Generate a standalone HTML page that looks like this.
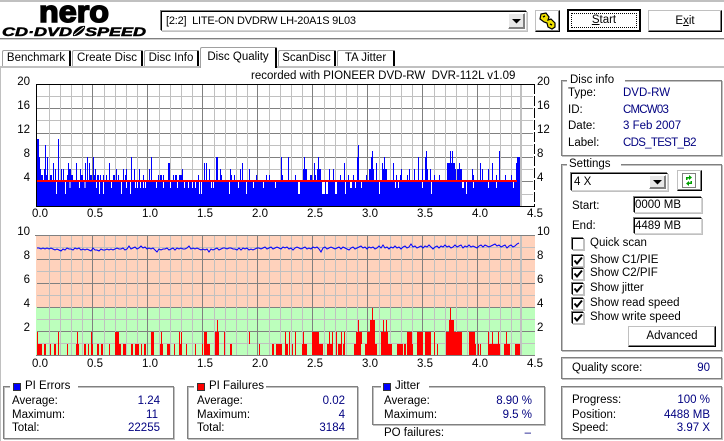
<!DOCTYPE html>
<html><head><meta charset="utf-8"><style>
html,body{margin:0;padding:0;background:#fff}
#r{position:relative;width:724px;height:441px;overflow:hidden;background:#fff;font:11.5px/14px "Liberation Sans","WenQuanYi Zen Hei",sans-serif;color:#000}
.a{position:absolute}
.t{position:absolute;white-space:nowrap;line-height:14px}
.v{position:absolute;white-space:nowrap;line-height:14px;color:#000080}
.r{text-align:right}
.g{position:absolute;border:1px solid #808080;box-shadow:1px 1px 0 #c0c0c0,inset 1px 1px 0 #c0c0c0;box-sizing:border-box}
.tab{position:absolute;top:50px;height:16px;box-sizing:border-box;border:1px solid #a0a0a0;border-right:2px solid #000;border-bottom:0;border-radius:2px 2px 0 0;background:#fff;text-align:center;line-height:15px;white-space:nowrap}
.sunk{position:absolute;box-sizing:border-box;border:1px solid #000;border-right:1px solid #d4d4d4;border-bottom:1px solid #d4d4d4;box-shadow:1px 1px 0 #c0c0c0,-1px -1px 0 #808080;background:#fff}
.btn{position:absolute;box-sizing:border-box;border:1px solid #c0c0c0;border-right-color:#000;border-bottom-color:#000;box-shadow:inset -1px -1px 0 #808080;background:#fff;text-align:center}
.cb{position:absolute;left:572px;width:12px;height:12px;box-sizing:border-box;border:1px solid #000;border-right:1px solid #c0c0c0;border-bottom:1px solid #c0c0c0;box-shadow:1px 1px 0 #c0c0c0,-1px -1px 0 #808080;background:#fff}
.cb svg{position:absolute;left:0;top:0}
.sq{position:absolute;width:8px;height:8px;border:1px solid #333;box-sizing:border-box}
</style></head><body><div id="r">

<div class="a" style="left:0;top:0;width:724px;height:2px;background:#c0c0c0"></div>
<div class="a" style="left:0;top:38px;width:724px;height:1px;background:#808080"></div>
<div class="a" style="left:0;top:39px;width:724px;height:1px;background:#d0d0d0"></div>
<div class="a" style="left:0;top:66px;width:724px;height:2px;background:#c0c0c0"></div>
<div class="a" style="left:0;top:66px;width:1px;height:375px;background:#c0c0c0"></div>

<svg class="a" style="left:0;top:0" width="155" height="40">
<text x="39" y="22" font-family="Liberation Sans" font-weight="700" font-size="31" textLength="70" lengthAdjust="spacingAndGlyphs" stroke="#000" stroke-width="1.6">nero</text>
<text x="2" y="36" font-family="Liberation Sans" font-weight="700" font-style="italic" font-size="12" textLength="70" lengthAdjust="spacingAndGlyphs" stroke="#000" stroke-width=".5">CD·DVD</text>
<path d="M73 36 C72 31 79 25 85 26 C86 30 79 37 73 36Z" fill="#000"/>
<path d="M74 35 L84 27" stroke="#fff" stroke-width="1"/>
<text x="85" y="36" font-family="Liberation Sans" font-weight="700" font-style="italic" font-size="12" textLength="61" lengthAdjust="spacingAndGlyphs" stroke="#000" stroke-width=".5">SPEED</text>
</svg>

<div class="sunk" style="left:161px;top:11px;width:366px;height:20px"></div>
<div class="t" style="left:166px;top:14px;font-size:11px;letter-spacing:-.2px">[2:2]&nbsp; LITE-ON DVDRW LH-20A1S 9L03</div>
<div class="btn" style="left:508px;top:13px;width:17px;height:16px;border-color:#fff #808080 #808080 #fff;background:#e8e8e8"></div>
<svg class="a" style="left:512px;top:19px" width="10" height="5"><path d="M0 0H9L4.5 4.5Z" fill="#000"/></svg>

<div class="btn" style="left:535px;top:10px;width:25px;height:22px"></div>
<svg class="a" style="left:538px;top:12px" width="20" height="18">
<path d="M3 2 L8 1 L11 5 L10 8 L13 7 L17 11 L17 15 L14 17 L10 15 L9 11 L6 10 L2 7Z" fill="#f0e000" stroke="#000" stroke-width="1.2"/>
<path d="M5 5 L7 4 M12 12 L14 13" stroke="#000" stroke-width="1.5"/>
</svg>

<div class="btn" style="left:567px;top:9px;width:74px;height:23px;border:2px solid #000;box-shadow:none;line-height:19px"><span style="position:absolute;left:2px;top:2px;right:2px;bottom:2px;border:1px dotted #000"></span><u style="text-decoration:underline">S</u>tart</div>
<div class="btn" style="left:648px;top:10px;width:74px;height:22px;line-height:20px">E<u>x</u>it</div>

<div class="tab" style="left:2px;width:69px">Benchmark</div>
<div class="tab" style="left:72px;width:71px">Create Disc</div>
<div class="tab" style="left:144px;width:55px">Disc Info</div>
<div class="tab" style="left:200px;top:47px;width:77px;height:21px;line-height:18px;border-bottom:0">Disc Quality</div>
<div class="tab" style="left:278px;width:58px">ScanDisc</div>
<div class="tab" style="left:337px;width:58px">TA Jitter</div>

<div class="t" style="left:251px;top:69px">recorded with PIONEER DVD-RW&nbsp; DVR-112L v1.09</div>

<svg class="a" style="left:0;top:70px" width="560" height="310" viewBox="0 70 560 310" shape-rendering="crispEdges">
<!-- chart 1 grid -->
<path d="M37 96.5H533M37 120.5H533M37 145.5H533M37 169.5H533M37 194.5H533" stroke="#c0c0c0"/>
<path d="M37 108.5H533M37 133.5H533M37 157.5H533M37 181.5H533" stroke="#808080"/>
<path d="M49.5 84V206M60.5 84V206M71.5 84V206M82.5 84V206M104.5 84V206M115.5 84V206M126.5 84V206M137.5 84V206M159.5 84V206M170.5 84V206M181.5 84V206M192.5 84V206M214.5 84V206M225.5 84V206M236.5 84V206M247.5 84V206M269.5 84V206M280.5 84V206M291.5 84V206M302.5 84V206M324.5 84V206M335.5 84V206M346.5 84V206M357.5 84V206M379.5 84V206M390.5 84V206M401.5 84V206M412.5 84V206M434.5 84V206M445.5 84V206M456.5 84V206M467.5 84V206M489.5 84V206M500.5 84V206M511.5 84V206" stroke="#c0c0c0"/>
<path d="M92.5 84V206M147.5 84V206M202.5 84V206M257.5 84V206M312.5 84V206M367.5 84V206M422.5 84V206M477.5 84V206" stroke="#808080"/>
<rect x="520" y="84" width="2" height="122" fill="#c0c0c0"/>
<!-- blue bars -->
<rect x="37" y="181" width="483" height="25" fill="#0000ff"/>
<g stroke="#0000ff" stroke-width="1" fill="none">
<path d="M37.5 206V139M38.5 206V139M58.5 206V139"/>
<path d="M45.5 206V145M358.5 206V145"/>
<path d="M372.5 206V151M426.5 206V151M450.5 206V151M452.5 206V151M499.5 206V151"/>
<path d="M39.5 206V157M47.5 206V157M87.5 206V157M93.5 206V157M131.5 206V157M151.5 206V157M216.5 206V157M217.5 206V157M281.5 206V157M288.5 206V157M304.5 206V157M318.5 206V157M357.5 206V157M371.5 206V157M384.5 206V157M418.5 206V157M425.5 206V157M517.5 206V157M518.5 206V157M519.5 206V157"/>
<path d="M53.5 206V163M68.5 206V163M76.5 206V163M85.5 206V163M89.5 206V163M109.5 206V163M168.5 206V163M169.5 206V163M204.5 206V163M206.5 206V163M242.5 206V163M314.5 206V163M344.5 206V163M376.5 206V163M382.5 206V163M393.5 206V163M447.5 206V163M448.5 206V163M449.5 206V163M451.5 206V163M453.5 206V163M454.5 206V163M459.5 206V163M480.5 206V163M492.5 206V163M516.5 206V163"/>
<path d="M40.5 206V169M44.5 206V169M55.5 206V169M61.5 206V169M63.5 206V169M69.5 206V169M70.5 206V169M80.5 206V169M95.5 206V169M116.5 206V169M123.5 206V169M126.5 206V169M134.5 206V169M139.5 206V169M149.5 206V169M182.5 206V169M209.5 206V169M220.5 206V169M230.5 206V169M240.5 206V169M249.5 206V169M303.5 206V169M305.5 206V169M306.5 206V169M317.5 206V169M319.5 206V169M320.5 206V169M329.5 206V169M333.5 206V169M369.5 206V169M370.5 206V169M373.5 206V169M383.5 206V169M385.5 206V169M386.5 206V169M401.5 206V169M409.5 206V169M414.5 206V169M422.5 206V169M427.5 206V169M430.5 206V169M455.5 206V169M457.5 206V169M458.5 206V169M460.5 206V169M461.5 206V169M472.5 206V169M482.5 206V169M488.5 206V169"/>
<path d="M41.5 206V175M42.5 206V175M46.5 206V175M50.5 206V175M51.5 206V175M67.5 206V175M71.5 206V175M72.5 206V175M81.5 206V175M82.5 206V175M90.5 206V175M91.5 206V175M94.5 206V175M97.5 206V175M98.5 206V175M100.5 206V175M103.5 206V175M106.5 206V175M113.5 206V175M114.5 206V175M118.5 206V175M125.5 206V175M143.5 206V175M158.5 206V175M160.5 206V175M161.5 206V175M163.5 206V175M173.5 206V175M175.5 206V175M176.5 206V175M179.5 206V175M180.5 206V175M181.5 206V175M198.5 206V175M221.5 206V175M231.5 206V175M234.5 206V175M256.5 206V175M266.5 206V175M269.5 206V175M282.5 206V175M295.5 206V175M310.5 206V175M311.5 206V175M315.5 206V175M340.5 206V175M348.5 206V175M353.5 206V175M366.5 206V175M396.5 206V175M400.5 206V175M407.5 206V175M434.5 206V175M439.5 206V175M458.5 206V175M473.5 206V175M496.5 206V175M505.5 206V175M511.5 206V175"/>
</g>
<g stroke="#fff" stroke-width="1" fill="none">
<path d="M56.5 181V194M65.5 181V194M70 181V188M79.5 181V188M85 181V188M96.5 181V188M99.5 181V194M103.5 181V194M111.5 181V188M121.5 181V194M126.5 181V188M130.5 181V194M135.5 181V188M137.5 181V188M140.5 181V188M143.5 181V188M145.5 181V188M156.5 181V188M163.5 181V188M170.5 181V188M177.5 181V188M184.5 181V188M188.5 181V188M192.5 181V188M195.5 181V188M199.5 181V194M201.5 181V194M211.5 181V188M213.5 181V188M229.5 181V194M238.5 181V188M246.5 181V194M253.5 181V188M263.5 181V188M275.5 181V188"/>
<path d="M298.5 181V194M299.5 181V194M322.5 181V194M323.5 181V194M324.5 181V194M326.5 181V194M327.5 181V194M335.5 181V194M336.5 181V194M345.5 181V194M350.5 181V188M351.5 181V188M355.5 181V188M361.5 181V188M379.5 181V194M395.5 181V188M398.5 181V188M422.5 181V188M431.5 181V194M462.5 181V188M463.5 181V188M466.5 181V194M473.5 181V188M488.5 181V188M496.5 181V188M513.5 181V188"/>
</g>
<rect x="37" y="180" width="480" height="2" fill="#ff0000"/>
<!-- chart 1 axes -->
<path d="M36 84.5H535M36 206.5H535" stroke="#000"/>
<path d="M36.5 84V207" stroke="#000"/>
<path d="M534.5 84V207" stroke="#000" stroke-dasharray="10 2"/>

<!-- chart 2 -->
<rect x="36" y="236" width="499" height="71" fill="#ffd2bc"/>
<rect x="36" y="307" width="499" height="49" fill="#bcffbc"/>
<path d="M37 247.5H535M37 271.5H535M37 295.5H535M37 319.5H535M37 343.5H535" stroke="#c0c0c0"/>
<path d="M35 235.5H535M37 259.5H535M37 283.5H535M37 307.5H535M37 331.5H535" stroke="#808080"/>
<path d="M49.5 236V356M60.5 236V356M71.5 236V356M82.5 236V356M104.5 236V356M115.5 236V356M126.5 236V356M137.5 236V356M159.5 236V356M170.5 236V356M181.5 236V356M192.5 236V356M214.5 236V356M225.5 236V356M236.5 236V356M247.5 236V356M269.5 236V356M280.5 236V356M291.5 236V356M302.5 236V356M324.5 236V356M335.5 236V356M346.5 236V356M357.5 236V356M379.5 236V356M390.5 236V356M401.5 236V356M412.5 236V356M434.5 236V356M445.5 236V356M456.5 236V356M467.5 236V356M489.5 236V356M500.5 236V356M511.5 236V356M520.5 236V356M521.5 236V356" stroke="#c0c0c0"/>
<path d="M92.5 236V356M147.5 236V356M202.5 236V356M257.5 236V356M312.5 236V356M367.5 236V356M422.5 236V356M477.5 236V356" stroke="#808080"/>
<!-- red -->
<g fill="#ff0000">
<path d="M37 344h5v12h-5zM44 344h2v12h-2zM50 344h1v12h-1zM54 344h2v12h-2zM58 344h1v12h-1zM67 344h1v12h-1zM76 344h3v12h-3zM84 344h2v12h-2zM88 344h1v12h-1zM91 344h2v12h-2zM97 344h2v12h-2zM101 344h2v12h-2zM109 344h1v12h-1zM115 344h6v12h-6zM123 344h3v12h-3zM131 344h2v12h-2zM135 344h4v12h-4zM141 344h1v12h-1zM144 344h2v12h-2zM151 344h3v12h-3zM160 344h3v12h-3zM167 344h3v12h-3zM174 344h1v12h-1zM179 344h3v12h-3zM186 344h1v12h-1zM195 344h1v12h-1zM202 344h1v12h-1zM204 344h6v12h-6zM215 344h4v12h-4zM224 344h1v12h-1zM230 344h2v12h-2zM259 344h1v12h-1zM272 344h2v12h-2zM276 344h6v12h-6zM285 344h1v12h-1zM286 344h2v12h-2zM289 344h1v12h-1zM292 344h1v12h-1zM295 344h1v12h-1zM302 344h5v12h-5zM312 344h11v12h-11zM327 344h6v12h-6zM336 344h1v12h-1zM338 344h3v12h-3zM341 344h1v12h-1zM343 344h2v12h-2zM354 344h7v12h-7zM365 344h12v12h-12zM381 344h11v12h-11zM397 344h6v12h-6zM404 344h2v12h-2zM407 344h6v12h-6zM417 344h6v12h-6zM425 344h6v12h-6zM434 344h1v12h-1zM437 344h1v12h-1zM446 344h16v12h-16zM469 344h7v12h-7zM478 344h1v12h-1zM480 344h1v12h-1zM488 344h12v12h-12zM504 344h6v12h-6zM515 344h5v12h-5z"/>
<path d="M37 332h1v12h-1zM58 332h1v12h-1zM77 332h1v12h-1zM91 332h1v12h-1zM115 332h4v12h-4zM151 332h3v12h-3zM161 332h1v12h-1zM179 332h1v12h-1zM181 332h1v12h-1zM204 332h3v12h-3zM215 332h4v12h-4zM224 332h1v12h-1zM249 332h1v12h-1zM285 332h1v12h-1zM289 332h1v12h-1zM295 332h1v12h-1zM303 332h1v12h-1zM312 332h7v12h-7zM329 332h1v12h-1zM332 332h1v12h-1zM336 332h1v12h-1zM341 332h1v12h-1zM344 332h1v12h-1zM356 332h6v12h-6zM367 332h8v12h-8zM381 332h7v12h-7zM407 332h5v12h-5zM417 332h6v12h-6zM425 332h6v12h-6zM434 332h1v12h-1zM446 332h16v12h-16zM469 332h6v12h-6zM488 332h1v12h-1zM492 332h1v12h-1zM498 332h1v12h-1zM506 332h1v12h-1z"/>
<path d="M217 320h1v12h-1zM358 320h1v12h-1zM370 320h5v12h-5zM383 320h1v12h-1zM386 320h1v12h-1zM449 320h5v12h-5z"/>
<path d="M372 308h1v12h-1zM450 308h1v12h-1z"/>
</g>
<polyline fill="none" stroke="#0000ff" stroke-width="1" shape-rendering="auto" points="37,248 39,248 41,249 43,248 45,249 47,248 49,249 51,248 53,249 55,250 57,249 59,250 61,251 63,249 65,250 67,248 69,249 71,249 73,250 75,248 77,249 79,248 81,250 83,249 85,250 87,249 89,250 91,251 93,248 95,250 97,250 99,251 101,249 103,250 105,250 107,249 109,250 111,249 113,250 115,249 117,248 119,249 121,249 123,248 125,250 127,249 129,246 131,249 133,248 135,247 137,249 139,248 141,246 143,248 145,247 147,249 149,248 151,249 153,248 155,250 157,252 159,249 161,250 163,249 165,249 167,248 169,250 171,249 173,248 175,250 177,248 179,249 181,248 183,249 185,249 187,248 189,246 191,249 193,248 195,249 197,248 199,249 201,250 203,249 205,250 207,249 209,252 211,249 213,250 215,249 217,248 219,250 221,249 223,248 225,248 227,249 229,248 231,248 233,249 235,249 237,250 239,248 241,250 243,248 245,249 247,248 249,250 251,249 253,250 255,249 257,248 259,248 261,249 263,248 265,247 267,249 269,248 271,247 273,249 275,248 277,247 279,248 281,249 283,247 285,248 287,247 289,249 291,248 293,250 295,248 297,247 299,248 301,249 303,248 305,247 307,249 309,248 311,249 313,247 315,248 317,247 319,249 321,252 323,248 325,247 327,249 329,248 331,247 333,248 335,249 337,248 339,247 341,249 343,247 345,248 347,249 349,250 351,248 353,247 355,249 357,248 359,247 361,246 363,248 365,247 367,249 369,247 371,248 373,247 375,249 377,248 379,246 381,248 383,245 385,248 387,247 389,249 391,247 393,248 395,246 397,248 399,247 401,249 403,247 405,246 407,248 409,247 411,244 413,247 415,246 417,248 419,247 421,246 423,248 425,246 427,247 429,245 431,247 433,249 435,247 437,246 439,248 441,246 443,247 445,245 447,247 449,246 451,248 453,247 455,245 457,247 459,246 461,245 463,248 465,246 467,247 469,245 471,247 473,246 475,247 477,248 479,246 481,245 483,247 485,245 487,246 489,247 491,246 493,245 495,244 497,246 499,245 501,247 503,246 505,245 507,248 509,246 511,245 513,247 515,246 517,244 519,243"/>
<path d="M36 355.5H535" stroke="#808080"/>
</svg>

<!-- axis labels -->
<div class="t r" style="left:10px;width:20px;top:75px">20</div>
<div class="t r" style="left:10px;width:20px;top:99px">16</div>
<div class="t r" style="left:10px;width:20px;top:123px">12</div>
<div class="t r" style="left:10px;width:20px;top:147px">8</div>
<div class="t r" style="left:10px;width:20px;top:171px">4</div>
<div class="t" style="left:537px;top:75px">20</div>
<div class="t" style="left:537px;top:99px">16</div>
<div class="t" style="left:537px;top:123px">12</div>
<div class="t" style="left:537px;top:147px">8</div>
<div class="t" style="left:537px;top:171px">4</div>
<div class="t r" style="left:10px;width:20px;top:225px">10</div>
<div class="t r" style="left:10px;width:20px;top:249px">8</div>
<div class="t r" style="left:10px;width:20px;top:273px">6</div>
<div class="t r" style="left:10px;width:20px;top:297px">4</div>
<div class="t r" style="left:10px;width:20px;top:321px">2</div>
<div class="t" style="left:537px;top:225px">10</div>
<div class="t" style="left:537px;top:249px">8</div>
<div class="t" style="left:537px;top:273px">6</div>
<div class="t" style="left:537px;top:297px">4</div>
<div class="t" style="left:537px;top:321px">2</div>

<div class="t" style="left:32px;top:207px">0.0</div><div class="t" style="left:87px;top:207px">0.5</div><div class="t" style="left:142px;top:207px">1.0</div><div class="t" style="left:197px;top:207px">1.5</div><div class="t" style="left:252px;top:207px">2.0</div><div class="t" style="left:307px;top:207px">2.5</div><div class="t" style="left:362px;top:207px">3.0</div><div class="t" style="left:417px;top:207px">3.5</div><div class="t" style="left:472px;top:207px">4.0</div><div class="t" style="left:527px;top:207px">4.5</div>
<div class="t" style="left:32px;top:357px">0.0</div><div class="t" style="left:87px;top:357px">0.5</div><div class="t" style="left:142px;top:357px">1.0</div><div class="t" style="left:197px;top:357px">1.5</div><div class="t" style="left:252px;top:357px">2.0</div><div class="t" style="left:307px;top:357px">2.5</div><div class="t" style="left:362px;top:357px">3.0</div><div class="t" style="left:417px;top:357px">3.5</div><div class="t" style="left:472px;top:357px">4.0</div><div class="t" style="left:527px;top:357px">4.5</div>

<!-- bottom groups -->
<div class="g" style="left:3px;top:386px;width:171px;height:53px"></div>
<div class="a" style="left:10px;top:380px;width:68px;height:14px;background:#fff"></div>
<div class="sq" style="left:13px;top:383px;background:#0000ff"></div>
<div class="t" style="left:25px;top:379px">PI Errors</div>
<div class="t" style="left:12px;top:394px">Average:</div><div class="v r" style="left:100px;width:60px;top:394px">1.24</div>
<div class="t" style="left:12px;top:408px">Maximum:</div><div class="v r" style="left:100px;width:58px;top:408px">11</div>
<div class="t" style="left:12px;top:421px">Total:</div><div class="v r" style="left:100px;width:60px;top:421px">22255</div>

<div class="g" style="left:187px;top:386px;width:171px;height:53px"></div>
<div class="a" style="left:194px;top:380px;width:72px;height:14px;background:#fff"></div>
<div class="sq" style="left:197px;top:383px;background:#ff0000"></div>
<div class="t" style="left:209px;top:379px">PI Failures</div>
<div class="t" style="left:197px;top:394px">Average:</div><div class="v r" style="left:285px;width:60px;top:394px">0.02</div>
<div class="t" style="left:197px;top:408px">Maximum:</div><div class="v r" style="left:285px;width:60px;top:408px">4</div>
<div class="t" style="left:197px;top:421px">Total:</div><div class="v r" style="left:285px;width:60px;top:421px">3184</div>

<div class="g" style="left:372px;top:386px;width:173px;height:39px"></div>
<div class="a" style="left:381px;top:380px;width:48px;height:12px;background:#fff"></div>
<div class="sq" style="left:383px;top:383px;background:#0000ff"></div>
<div class="t" style="left:395px;top:379px">Jitter</div>
<div class="t" style="left:384px;top:394px">Average:</div><div class="v r" style="left:470px;width:62px;top:394px">8.90 %</div>
<div class="t" style="left:384px;top:408px">Maximum:</div><div class="v r" style="left:470px;width:62px;top:408px">9.5 %</div>
<div class="t" style="left:384px;top:426px">PO failures:</div><div class="v r" style="left:470px;width:61px;top:426px">–</div>

<!-- disc info -->
<div class="g" style="left:561px;top:80px;width:161px;height:76px"></div>
<div class="a" style="left:567px;top:74px;width:58px;height:12px;background:#fff"></div>
<div class="t" style="left:570px;top:73px">Disc info</div>
<div class="t" style="left:568px;top:86px">Type:</div><div class="v" style="left:623px;top:86px">DVD-RW</div>
<div class="t" style="left:568px;top:103px">ID:</div><div class="v" style="left:623px;top:103px;letter-spacing:-.8px">CMCW03</div>
<div class="t" style="left:568px;top:119px">Date:</div><div class="v" style="left:623px;top:119px">3 Feb 2007</div>
<div class="t" style="left:568px;top:136px">Label:</div><div class="v" style="left:623px;top:136px;letter-spacing:-.7px">CDS_TEST_B2</div>

<!-- settings -->
<div class="g" style="left:561px;top:164px;width:161px;height:187px"></div>
<div class="a" style="left:567px;top:158px;width:54px;height:12px;background:#fff"></div>
<div class="t" style="left:569px;top:157px">Settings</div>
<div class="sunk" style="left:571px;top:173px;width:97px;height:18px"></div>
<div class="t" style="left:574px;top:175px">4 X</div>
<div class="btn" style="left:649px;top:175px;width:17px;height:14px;border-color:#fff #808080 #808080 #fff;background:#e8e8e8"></div>
<svg class="a" style="left:653px;top:180px" width="10" height="5"><path d="M0 0H9L4.5 4.5Z" fill="#000"/></svg>
<div class="btn" style="left:677px;top:170px;width:25px;height:21px;border-color:#c0c0c0 #000 #000 #c0c0c0"></div>
<svg class="a" style="left:681px;top:172px" width="17" height="17">
<rect x="1.5" y="1.5" width="13" height="14" fill="#fff" stroke="#000" stroke-dasharray="1 1"/>
<path d="M5 8 V5 H8 V3 L11 5.5 L8 8 V6.5 H6.5 V8Z" fill="#00a000"/>
<path d="M11 9 V12 H8 V14 L5 11.5 L8 9 V10.5 H9.5 V9Z" fill="#00a000"/>
</svg>
<div class="t" style="left:572px;top:199px">Start:</div>
<div class="sunk" style="left:634px;top:197px;width:68px;height:16px"></div>
<div class="t" style="left:635px;top:198px">0000 MB</div>
<div class="t" style="left:572px;top:219px">End:</div>
<div class="sunk" style="left:634px;top:218px;width:68px;height:16px"></div>
<div class="t" style="left:635px;top:219px">4489 MB</div>

<div class="cb" style="top:238px"></div><div class="t" style="left:590px;top:236px">Quick scan</div>
<div class="cb" style="top:255px"><svg width="10" height="10"><path d="M1.5 4.5 L4 7.5 L9 1.5" fill="none" stroke="#000" stroke-width="2"/></svg></div><div class="t" style="left:590px;top:253px">Show C1/PIE</div>
<div class="cb" style="top:268px"><svg width="10" height="10"><path d="M1.5 4.5 L4 7.5 L9 1.5" fill="none" stroke="#000" stroke-width="2"/></svg></div><div class="t" style="left:590px;top:266px">Show C2/PIF</div>
<div class="cb" style="top:283px"><svg width="10" height="10"><path d="M1.5 4.5 L4 7.5 L9 1.5" fill="none" stroke="#000" stroke-width="2"/></svg></div><div class="t" style="left:590px;top:281px">Show jitter</div>
<div class="cb" style="top:298px"><svg width="10" height="10"><path d="M1.5 4.5 L4 7.5 L9 1.5" fill="none" stroke="#000" stroke-width="2"/></svg></div><div class="t" style="left:590px;top:296px">Show read speed</div>
<div class="cb" style="top:312px"><svg width="10" height="10"><path d="M1.5 4.5 L4 7.5 L9 1.5" fill="none" stroke="#000" stroke-width="2"/></svg></div><div class="t" style="left:590px;top:310px">Show write speed</div>
<div class="btn" style="left:628px;top:326px;width:88px;height:21px;line-height:19px">Advanced</div>

<!-- quality -->
<div class="g" style="left:561px;top:357px;width:161px;height:22px"></div>
<div class="t" style="left:572px;top:361px">Quality score:</div><div class="v r" style="left:660px;width:50px;top:361px">90</div>

<!-- progress -->
<div class="g" style="left:561px;top:386px;width:161px;height:53px"></div>
<div class="t" style="left:572px;top:393px">Progress:</div><div class="v r" style="left:640px;width:70px;top:393px">100 %</div>
<div class="t" style="left:572px;top:408px">Position:</div><div class="v r" style="left:640px;width:70px;top:408px">4488 MB</div>
<div class="t" style="left:572px;top:421px">Speed:</div><div class="v r" style="left:640px;width:70px;top:421px">3.97 X</div>

</div></body></html>
